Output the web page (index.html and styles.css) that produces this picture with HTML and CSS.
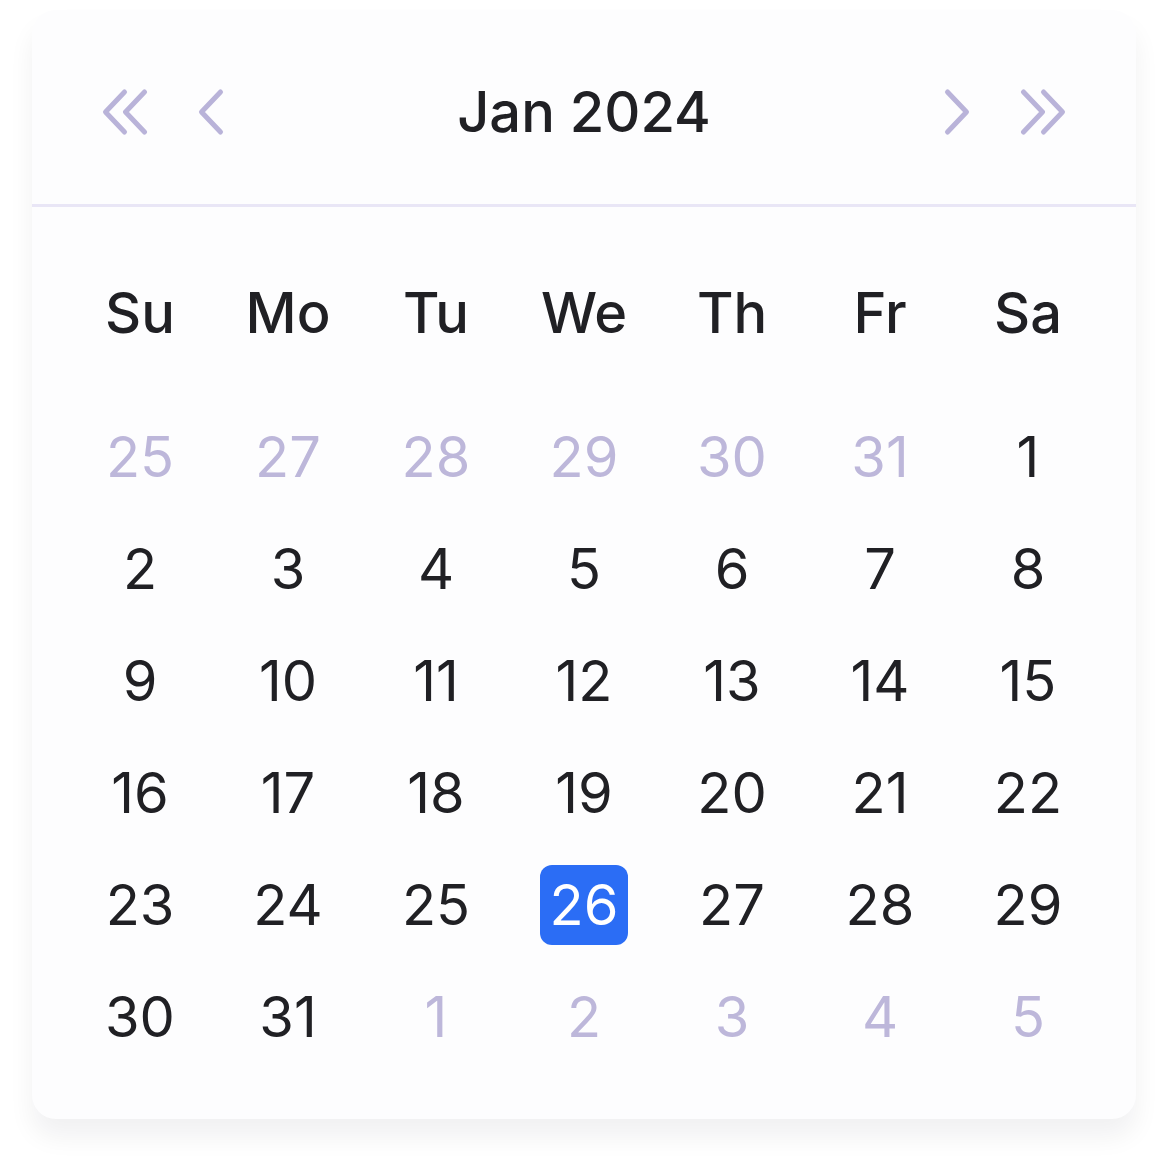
FILE: index.html
```html
<!DOCTYPE html>
<html lang="en">
<head>
    <meta charset="UTF-8">
    <meta name="viewport" content="width=device-width, initial-scale=1.0">
    <title>Date Picker</title>
    <link rel="stylesheet" href="styles.css">
</head>
<body>

    <div class="calendar">
        <div class="calendar-header">
            <div class="nav-group">
                <button class="nav-btn nav-double" title="Previous year">
                    <svg width="48" height="48" viewBox="0 0 48 48">
                        <path d="M24.5 4 L5.5 24 L24.5 44" />
                        <path d="M44.5 4 L25.5 24 L44.5 44" />
                    </svg>
                </button>
                <button class="nav-btn nav-single" title="Previous month">
                    <svg width="32" height="48" viewBox="0 0 32 48">
                        <path d="M24.5 4 L5.5 24 L24.5 44" />
                    </svg>
                </button>
            </div>

            <h2 class="month-title">Jan 2024</h2>

            <div class="nav-group">
                <button class="nav-btn nav-single" title="Next month">
                    <svg width="32" height="48" viewBox="0 0 32 48">
                        <path d="M7.5 4 L26.5 24 L7.5 44" />
                    </svg>
                </button>
                <button class="nav-btn nav-double" title="Next year">
                    <svg width="48" height="48" viewBox="0 0 48 48">
                        <path d="M3.5 4 L22.5 24 L3.5 44" />
                        <path d="M23.5 4 L42.5 24 L23.5 44" />
                    </svg>
                </button>
            </div>
        </div>

        <div class="calendar-body">
            <div class="week-row">
                <span>Su</span>
                <span>Mo</span>
                <span>Tu</span>
                <span>We</span>
                <span>Th</span>
                <span>Fr</span>
                <span>Sa</span>
            </div>

            <div class="day-grid">
                <!-- previous month -->
                <span class="day muted">25</span>
                <span class="day muted">27</span>
                <span class="day muted">28</span>
                <span class="day muted">29</span>
                <span class="day muted">30</span>
                <span class="day muted">31</span>
                <span class="day">1</span>

                <span class="day">2</span>
                <span class="day">3</span>
                <span class="day">4</span>
                <span class="day">5</span>
                <span class="day">6</span>
                <span class="day">7</span>
                <span class="day">8</span>

                <span class="day">9</span>
                <span class="day">10</span>
                <span class="day">11</span>
                <span class="day">12</span>
                <span class="day">13</span>
                <span class="day">14</span>
                <span class="day">15</span>

                <span class="day">16</span>
                <span class="day">17</span>
                <span class="day">18</span>
                <span class="day">19</span>
                <span class="day">20</span>
                <span class="day">21</span>
                <span class="day">22</span>

                <span class="day">23</span>
                <span class="day">24</span>
                <span class="day">25</span>
                <span class="day selected">26</span>
                <span class="day">27</span>
                <span class="day">28</span>
                <span class="day">29</span>

                <span class="day">30</span>
                <span class="day">31</span>
                <!-- next month -->
                <span class="day muted">1</span>
                <span class="day muted">2</span>
                <span class="day muted">3</span>
                <span class="day muted">4</span>
                <span class="day muted">5</span>
            </div>
        </div>
    </div>

</body>
</html>
```

FILE: styles.css
```css
/* General Styles */
body {
    margin: 0;
    background: #ffffff;
    font-family: 'Inter', 'Noto Sans', sans-serif;
    color: #202024;
}

/* Card */
.calendar {
    width: 1104px;
    margin: 10px 32px 56px;
    background: #fdfdfe;
    border-radius: 24px;
    box-shadow: 0px 18px 26px rgba(20, 20, 40, 0.06);
}

/* Header */
.calendar-header {
    display: flex;
    justify-content: space-between;
    align-items: center;
    padding: 70px 68px 60px;
    border-bottom: 3px solid #e9e6f6;
}
.nav-group {
    display: flex;
    align-items: center;
    gap: 48px;
}
.nav-btn {
    display: flex;
    padding: 0;
    border: none;
    background: none;
    cursor: pointer;
}
.nav-btn svg path {
    fill: none;
    stroke: #b9b3d9;
    stroke-width: 5;
    stroke-linecap: round;
    stroke-linejoin: round;
}
.month-title {
    margin: 0;
    font-size: 56px;
    line-height: 64px;
    font-weight: 500;
    color: #202024;
}

/* Body */
.calendar-body {
    padding: 66px 64px 62px;
}
.week-row,
.day-grid {
    display: grid;
    grid-template-columns: repeat(7, 88px);
    column-gap: 60px;
}
.week-row {
    margin-bottom: 64px;
}
.week-row span {
    height: 80px;
    display: flex;
    justify-content: center;
    align-items: center;
    font-size: 56px;
    font-weight: 500;
}
.day-grid {
    row-gap: 32px;
}
.day {
    height: 80px;
    display: flex;
    justify-content: center;
    align-items: center;
    font-size: 56px;
    font-weight: 400;
    border-radius: 12px;
    color: #202024;
}
.day.muted {
    color: #bdb7da;
}
.day.selected {
    background: #2b6df5;
    color: #ffffff;
}
```
